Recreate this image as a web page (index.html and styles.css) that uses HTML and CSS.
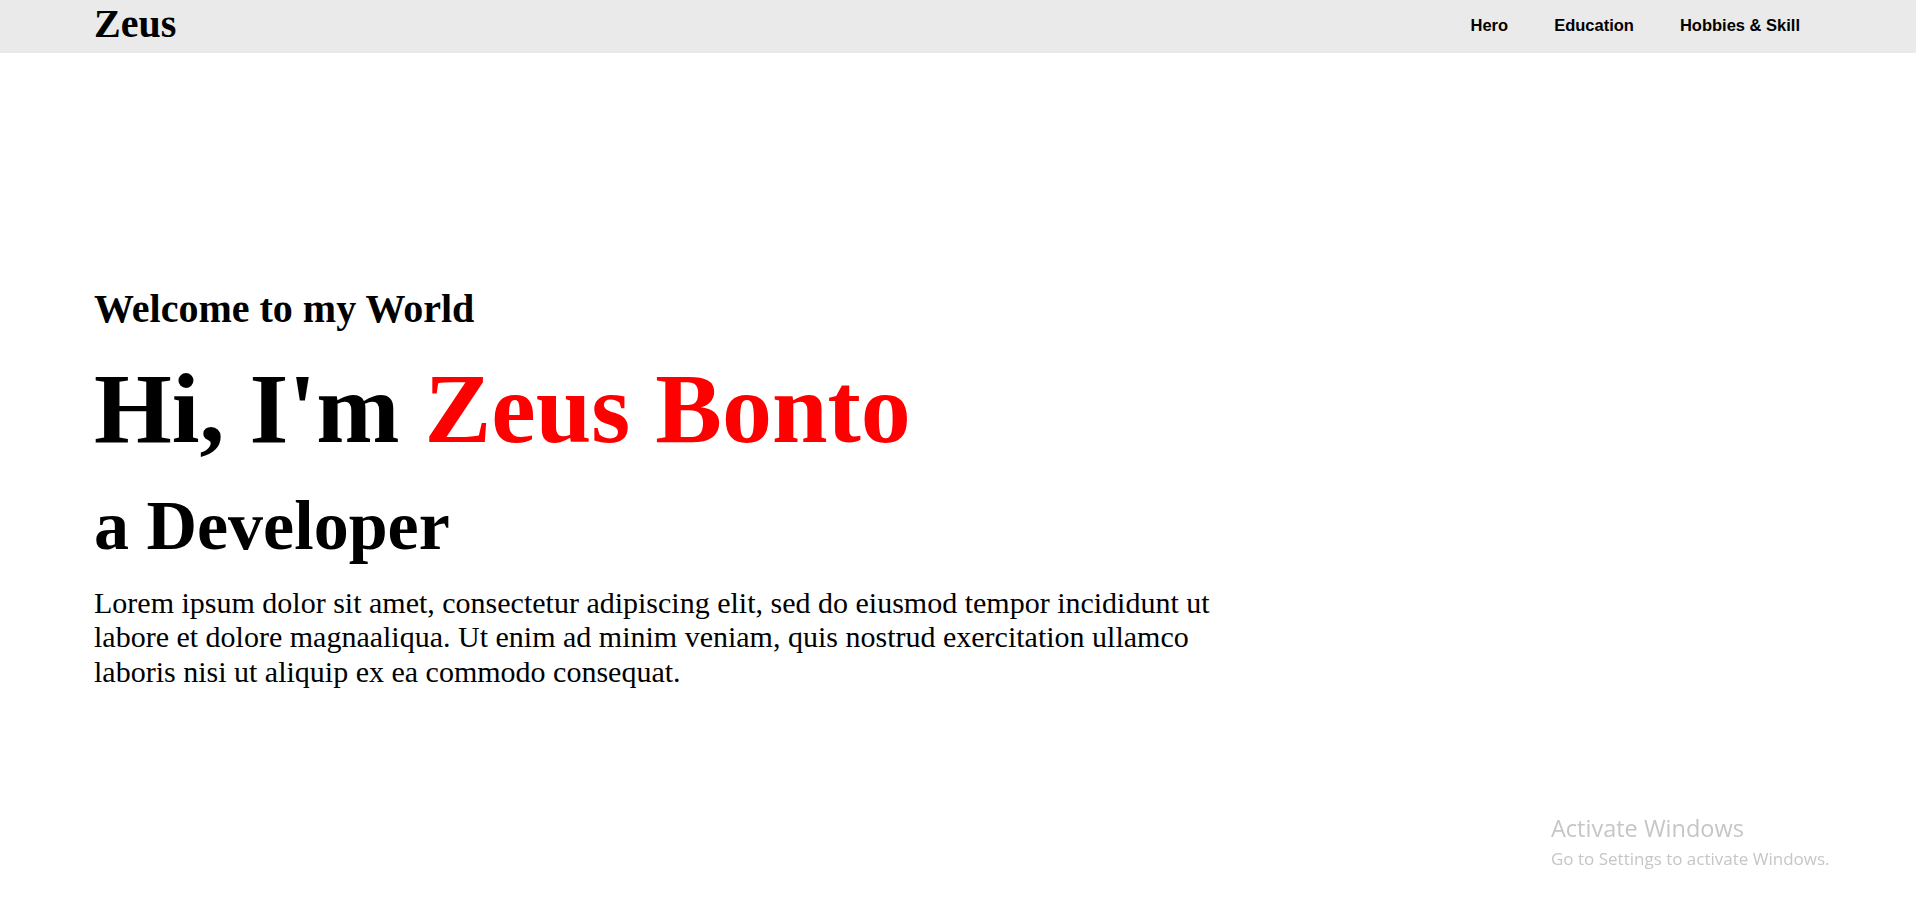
FILE: index.html
```html
<!DOCTYPE html>
<html lang="en">
<head>
<meta charset="utf-8">
<title>Zeus</title>
<link rel="stylesheet" href="styles.css">
</head>
<body>
<header class="topbar">
  <div class="logo">Zeus</div>
  <nav class="nav">
    <a class="nav-link" href="#hero">Hero</a>
    <a class="nav-link" href="#education">Education</a>
    <a class="nav-link" href="#hobbies">Hobbies &amp; Skill</a>
  </nav>
</header>
<main class="hero" id="hero">
  <h2 class="welcome">Welcome to my World</h2>
  <h1 class="title">Hi, I'm <span class="name">Zeus Bonto</span></h1>
  <h3 class="role">a Developer</h3>
  <p class="intro">Lorem ipsum dolor sit amet, consectetur adipiscing elit, sed do eiusmod tempor incididunt ut labore et dolore magnaaliqua. Ut enim ad minim veniam, quis nostrud exercitation ullamco laboris nisi ut aliquip ex ea commodo consequat.</p>
</main>
<div class="watermark">
  <div class="wm-title">Activate Windows</div>
  <div class="wm-sub">Go to Settings to activate Windows.</div>
</div>
</body>
</html>
```
FILE: styles.css
```css
html, body {
  margin: 0;
  padding: 0;
  background: #ffffff;
  color: #000000;
  font-family: "Liberation Serif", "Times New Roman", serif;
}

.topbar {
  height: 53px;
  background: #eaeaea;
  display: flex;
  align-items: flex-start;
  justify-content: space-between;
  padding: 0 116px 0 94px;
  box-sizing: border-box;
}

.logo {
  font-size: 40px;
  font-weight: bold;
  line-height: 40px;
  margin-top: 3.5px;
}

.nav {
  display: flex;
  gap: 46px;
  margin-top: 14.5px;
}

.nav-link {
  font-family: "Liberation Sans", Arial, sans-serif;
  font-size: 16.5px;
  font-weight: bold;
  line-height: 20px;
  color: #000000;
  text-decoration: none;
}

.hero {
  display: flex;
  flex-direction: column;
  align-items: flex-start;
  padding: 232.5px 0 0 94px;
}

.welcome {
  margin: 0;
  font-size: 40px;
  line-height: 46px;
  font-weight: bold;
}

.title {
  margin: 19px 0 0;
  font-size: 100px;
  line-height: 115px;
  font-weight: bold;
}

.name {
  color: #ff0000;
}

.role {
  margin: 20.5px 0 0;
  font-size: 70px;
  line-height: 80px;
  font-weight: bold;
}

.intro {
  margin: 19.5px 0 0;
  width: 1150px;
  font-size: 30px;
  line-height: 34.5px;
}

.watermark {
  position: fixed;
  left: 1551px;
  top: 813px;
  color: #c6c6c6;
  font-family: "Open Sans", "Noto Sans", sans-serif;
  pointer-events: none;
}

.wm-title {
  font-size: 23.5px;
  line-height: 30px;
}

.wm-sub {
  font-size: 17px;
  line-height: 31px;
}
```
